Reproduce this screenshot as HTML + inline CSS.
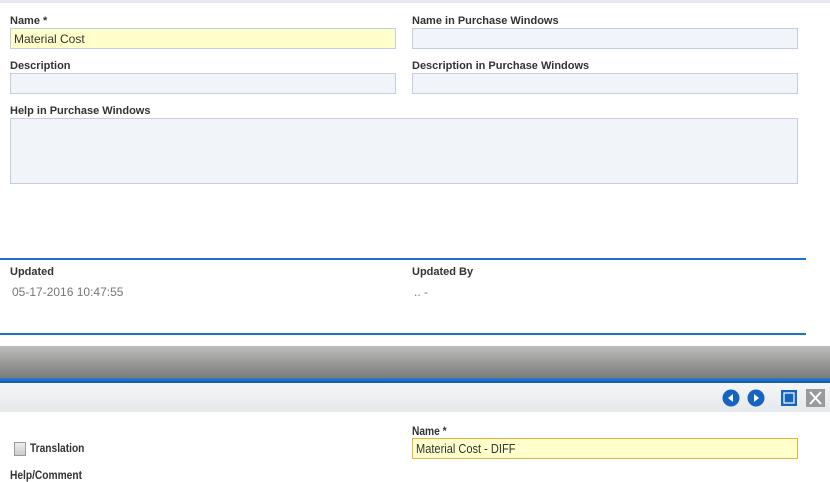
<!DOCTYPE html>
<html><head><style>
body{margin:0;width:830px;height:481px;overflow:hidden;background:#fff;font-family:"Liberation Sans",sans-serif;position:relative}
.a{position:absolute}
.l{position:absolute;font-size:11px;font-weight:bold;color:#333}
.i{position:absolute;box-sizing:border-box;border:1px solid #c3cfe0;background:#f1f4f9;font-size:12px;color:#333;padding:4px 3px 2px;line-height:13px}
.n{transform-origin:left top;transform:scaleX(.85);white-space:nowrap;font-size:12px}
</style></head><body>
<div class="a" style="left:0;top:0;width:830px;height:3px;background:#e4e8ee"></div>
<div class="l" style="left:10px;top:15px">Name *</div>
<div class="l" style="left:412px;top:15px">Name in Purchase Windows</div>
<div class="i" style="left:10px;top:28px;width:386px;height:21px;background:#ffffcc">Material Cost</div>
<div class="i" style="left:412px;top:28px;width:386px;height:21px"></div>
<div class="l" style="left:10px;top:60px">Description</div>
<div class="l" style="left:412px;top:60px">Description in Purchase Windows</div>
<div class="i" style="left:10px;top:73px;width:386px;height:21px"></div>
<div class="i" style="left:412px;top:73px;width:386px;height:21px"></div>
<div class="l" style="left:10px;top:105px">Help in Purchase Windows</div>
<div class="i" style="left:10px;top:118px;width:788px;height:66px"></div>
<div class="a" style="left:0;top:258px;width:806px;height:2px;background:#1a73c8"></div>
<div class="l" style="left:10px;top:266px">Updated</div>
<div class="l" style="left:412px;top:266px">Updated By</div>
<div class="a" style="left:12px;top:285px;font-size:12px;color:#777">05-17-2016 10:47:55</div>
<div class="a" style="left:414px;top:285px;font-size:12px;color:#777">.. -</div>
<div class="a" style="left:0;top:333px;width:806px;height:2px;background:#1a73c8"></div>
<div class="a" style="left:0;top:346px;width:830px;height:32px;background:linear-gradient(#bdbdbb,#7a7a7a)"></div>
<div class="a" style="left:0;top:378px;width:830px;height:5px;background:linear-gradient(#2f7bd0,#0e5aa8)"></div>
<div class="a" style="left:0;top:383px;width:830px;height:29px;background:linear-gradient(#f5f6f7,#e5e8ec)"></div>
<svg class="a" style="left:721px;top:388px" width="110" height="20">
<circle cx="10" cy="10" r="8.5" fill="#1565c0"/><path d="M12 6v8l-5-4z" fill="#fff"/>
<circle cx="35" cy="10" r="8.5" fill="#1565c0"/><path d="M33 6v8l5-4z" fill="#fff"/>
<rect x="60" y="2" width="16" height="16" fill="#1565c0"/><rect x="63" y="5" width="10" height="10" fill="none" stroke="#fff" stroke-width="1.2"/>
<rect x="85" y="1" width="19" height="18" fill="#9a9a9a"/><path d="M89 4l11 12M100 4l-11 12" stroke="#fff" stroke-width="2"/>
</svg>
<div class="l n" style="left:412px;top:424px">Name *</div>
<div class="i" style="left:412px;top:438px;width:386px;height:21px;background:#ffffcc;border-color:#f0b040;padding-top:3px"><span class="n" style="display:inline-block;font-size:13px">Material Cost - DIFF</span></div>
<div class="a" style="left:14px;top:442px;width:10px;height:12px;border:1px solid #999;background:linear-gradient(#eee,#ccc)"></div>
<div class="l n" style="left:30px;top:441px">Translation</div>
<div class="l n" style="left:10px;top:468px">Help/Comment</div>
</body></html>
